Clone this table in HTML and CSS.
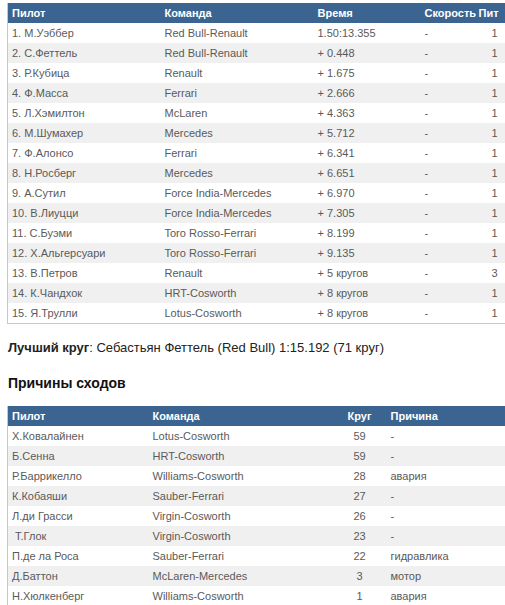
FILE: index.html
```html
<!DOCTYPE html>
<html>
<head>
<meta charset="utf-8">
<link rel="stylesheet" href="styles.css">
</head>
<body>
<div class="page">
  <table class="results">
    <colgroup><col class="c1"><col class="c2"><col class="c3"><col class="c4"><col class="c5"></colgroup>
    <thead>
      <tr><th>Пилот</th><th>Команда</th><th>Время</th><th>Скорость</th><th class="pit">Пит</th></tr>
    </thead>
    <tbody>
      <tr><td>1. М.Уэббер</td><td>Red Bull-Renault</td><td>1.50:13.355</td><td>-</td><td class="pit">1</td></tr>
      <tr><td>2. С.Феттель</td><td>Red Bull-Renault</td><td>+ 0.448</td><td>-</td><td class="pit">1</td></tr>
      <tr><td>3. Р.Кубица</td><td>Renault</td><td>+ 1.675</td><td>-</td><td class="pit">1</td></tr>
      <tr><td>4. Ф.Масса</td><td>Ferrari</td><td>+ 2.666</td><td>-</td><td class="pit">1</td></tr>
      <tr><td>5. Л.Хэмилтон</td><td>McLaren</td><td>+ 4.363</td><td>-</td><td class="pit">1</td></tr>
      <tr><td>6. М.Шумахер</td><td>Mercedes</td><td>+ 5.712</td><td>-</td><td class="pit">1</td></tr>
      <tr><td>7. Ф.Алонсо</td><td>Ferrari</td><td>+ 6.341</td><td>-</td><td class="pit">1</td></tr>
      <tr><td>8. Н.Росберг</td><td>Mercedes</td><td>+ 6.651</td><td>-</td><td class="pit">1</td></tr>
      <tr><td>9. А.Сутил</td><td>Force India-Mercedes</td><td>+ 6.970</td><td>-</td><td class="pit">1</td></tr>
      <tr><td>10. В.Лиуцци</td><td>Force India-Mercedes</td><td>+ 7.305</td><td>-</td><td class="pit">1</td></tr>
      <tr><td>11. С.Буэми</td><td>Toro Rosso-Ferrari</td><td>+ 8.199</td><td>-</td><td class="pit">1</td></tr>
      <tr><td>12. Х.Альгерсуари</td><td>Toro Rosso-Ferrari</td><td>+ 9.135</td><td>-</td><td class="pit">1</td></tr>
      <tr><td>13. В.Петров</td><td>Renault</td><td>+ 5 кругов</td><td>-</td><td class="pit">3</td></tr>
      <tr><td>14. К.Чандхок</td><td>HRT-Cosworth</td><td>+ 8 кругов</td><td>-</td><td class="pit">1</td></tr>
      <tr><td>15. Я.Трулли</td><td>Lotus-Cosworth</td><td>+ 8 кругов</td><td>-</td><td class="pit">1</td></tr>
    </tbody>
  </table>

  <p class="lap"><b>Лучший круг</b>: Себастьян Феттель (Red Bull) 1:15.192 (71 круг)</p>

  <h3 class="title">Причины сходов</h3>

  <table class="results retire">
    <colgroup><col class="r1"><col class="r2"><col class="r3"><col class="r4"></colgroup>
    <thead>
      <tr><th>Пилот</th><th>Команда</th><th class="lapn">Круг</th><th>Причина</th></tr>
    </thead>
    <tbody>
      <tr><td>Х.Ковалайнен</td><td>Lotus-Cosworth</td><td class="lapn">59</td><td>-</td></tr>
      <tr><td>Б.Сенна</td><td>HRT-Cosworth</td><td class="lapn">59</td><td>-</td></tr>
      <tr><td>Р.Баррикелло</td><td>Williams-Cosworth</td><td class="lapn">28</td><td>авария</td></tr>
      <tr><td>К.Кобаяши</td><td>Sauber-Ferrari</td><td class="lapn">27</td><td>-</td></tr>
      <tr><td>Л.ди Грасси</td><td>Virgin-Cosworth</td><td class="lapn">26</td><td>-</td></tr>
      <tr><td>&nbsp;Т.Глок</td><td>Virgin-Cosworth</td><td class="lapn">23</td><td>-</td></tr>
      <tr><td>П.де ла Роса</td><td>Sauber-Ferrari</td><td class="lapn">22</td><td>гидравлика</td></tr>
      <tr><td>Д.Баттон</td><td>McLaren-Mercedes</td><td class="lapn">3</td><td>мотор</td></tr>
      <tr><td>Н.Хюлкенберг</td><td>Williams-Cosworth</td><td class="lapn">1</td><td>авария</td></tr>
    </tbody>
  </table>
</div>
</body>
</html>
```

FILE: styles.css
```css
html, body {
  margin: 0;
  padding: 0;
  overflow: hidden;
  background: #fff;
}
.page {
  padding: 3px 0 0 7px;
  font-family: "Liberation Sans", Arial, sans-serif;
}
.results {
  border-collapse: collapse;
  table-layout: fixed;
  width: 498px;
  font-size: 11px;
  border-left: 1px solid #c8c8c8;
  border-bottom: 1px solid #c8c8c8;
}
.results th {
  background: #3b6590;
  color: #fff;
  font-weight: bold;
  text-align: left;
  height: 20px;
  padding: 0 4px;
  white-space: nowrap;
}
.results td {
  color: #5a5a5a;
  height: 20px;
  padding: 0 4px;
  white-space: nowrap;
  overflow: hidden;
}
.results tbody tr:nth-child(even) td {
  background: #f0f0f0;
}
.c1 { width: 153px; }
.c2 { width: 153px; }
.c3 { width: 107px; }
.c4 { width: 58px; }
.c5 { width: 27px; }
.results th.pit { text-align: left; padding: 0; }
.results td.pit { text-align: right; padding-right: 8px; }
.r1 { width: 141px; }
.r2 { width: 184px; }
.r3 { width: 54px; }
.r4 { width: 119px; }
.lapn { text-align: center; }
.results th.lapn { text-align: center; }
.lap {
  margin: 16px 0 0 1px;
  font-size: 13px;
  color: #222;
  line-height: 16px;
}
.title {
  margin: 18px 0 0 1px;
  font-size: 14px;
  font-weight: bold;
  color: #111;
  line-height: 18px;
}
.retire {
  margin-top: 14px;
}
```
